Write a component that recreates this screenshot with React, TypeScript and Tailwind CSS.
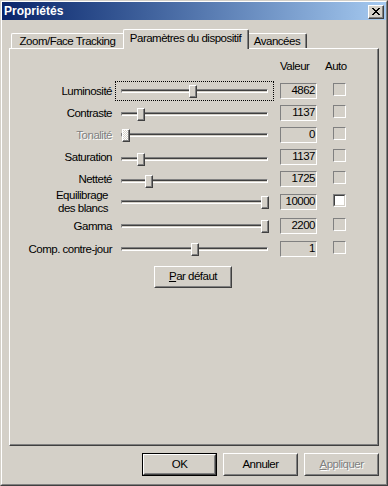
import React from "react";

type Row = {
  label: string[];
  value: string;
  pos: number;
  h: string;
  focus?: boolean;
  disabled?: boolean;
  enabledBox?: boolean;
  sOff?: string;
  lpr?: string;
};

const rows: Row[] = [
  { label: ["Luminosité"], value: "4862", pos: 74, h: "h-[22px]", focus: true },
  { label: ["Contraste"], value: "1137", pos: 22, h: "h-[22px]", sOff: "mt-[2px]" },
  { label: ["Tonalité"], value: "0", pos: 7, h: "h-[22px]", disabled: true },
  { label: ["Saturation"], value: "1137", pos: 22, h: "h-[22px]", sOff: "mt-[3px]" },
  { label: ["Netteté"], value: "1725", pos: 30, h: "h-[22px]", sOff: "mt-[3px]" },
  { label: ["Equilibrage", "des blancs"], value: "10000", pos: 146, h: "h-[24px]", enabledBox: true, lpr: "pr-[4px]" },
  { label: ["Gamma"], value: "2200", pos: 146, h: "h-[24px]" },
  { label: ["Comp. contre-jour"], value: "1", pos: 76, h: "h-[22px]" },
];

function Btn({
  children,
  w,
  h,
  isDefault,
}: {
  children: React.ReactNode;
  w: string;
  h: string;
  isDefault?: boolean;
}) {
  const inner = (
    <div className="w-full h-full border border-t-white border-l-white border-r-[#404040] border-b-[#404040]">
      <div className="w-full h-full border border-t-[#d4d0c8] border-l-[#d4d0c8] border-r-[#808080] border-b-[#808080] flex items-center justify-center">
        {children}
      </div>
    </div>
  );
  return (
    <div className={`${w} ${h} ${isDefault ? "border border-black" : ""}`}>{inner}</div>
  );
}

function CloseGlyph() {
  const px: [number, number, number][] = [
    [0, 0, 2], [6, 0, 2],
    [1, 1, 2], [5, 1, 2],
    [2, 2, 4],
    [3, 3, 2],
    [2, 4, 4],
    [1, 5, 2], [5, 5, 2],
    [0, 6, 2], [6, 6, 2],
  ];
  return (
    <svg width="8" height="7" viewBox="0 0 8 7" shapeRendering="crispEdges">
      {px.map(([x, y, w], i) => (
        <rect key={i} x={x} y={y} width={w} height={1} fill="#000" />
      ))}
    </svg>
  );
}

function Slider({ pos, focus, disabled, sOff }: { pos: number; focus?: boolean; disabled?: boolean; sOff?: string }) {
  return (
    <div className={`relative w-[159px] h-[20px] ml-[3px] shrink-0 ${sOff ?? ""}`}>
      {focus && <div className="absolute inset-0 border border-dotted border-black" />}
      <div className="absolute left-[6px] top-[8px] w-[147px] h-[4px] border border-t-[#808080] border-l-[#808080] border-r-white border-b-white">
        <div className="h-[1px] bg-[#404040]" />
      </div>
      <div
        className="absolute top-[4px] w-[8px] h-[13px] border border-t-white border-l-white border-r-[#404040] border-b-[#404040] bg-[#d4d0c8]"
        style={{ left: pos }}
      >
        <div
          className={`w-full h-full border-r border-b border-r-[#808080] border-b-[#808080] ${
            disabled ? "bg-[image:repeating-conic-gradient(#ffffff_0_25%,#d4d0c8_0_50%)] bg-[length:2px_2px]" : ""
          }`}
        />
      </div>
    </div>
  );
}

function Checkbox({ enabled }: { enabled?: boolean }) {
  return (
    <div className="ml-[16px] mb-[3px] w-[13px] h-[13px] shrink-0 border border-t-[#808080] border-l-[#808080] border-r-white border-b-white">
      {enabled && (
        <div className="w-full h-full bg-white border border-t-[#404040] border-l-[#404040] border-r-[#d4d0c8] border-b-[#d4d0c8]" />
      )}
    </div>
  );
}

export default function App() {
  return (
    <div className="w-[388px] h-[486px] bg-[#d4d0c8] font-['Liberation_Sans',Arial,sans-serif] text-[11.5px] tracking-[-0.5px] text-black border border-t-[#d4d0c8] border-l-[#d4d0c8] border-r-[#404040] border-b-[#404040]">
      <div className="w-full h-full border border-t-white border-l-white border-r-[#808080] border-b-[#808080] flex flex-col">
        {/* Title bar */}
        <div className="h-[18px] shrink-0 bg-linear-to-r from-[#0a246a] to-[#a6caf0] flex items-center justify-between pl-[2px] pr-[2px]">
          <span className="text-white font-bold text-[12px] tracking-normal leading-none">Propriétés</span>
          <div className="mt-[1px] w-[16px] h-[14px] border border-t-white border-l-white border-r-[#404040] border-b-[#404040] bg-[#d4d0c8]">
            <div className="w-full h-full border-r border-b border-r-[#808080] border-b-[#808080] flex items-center justify-center pl-[1px]">
              <CloseGlyph />
            </div>
          </div>
        </div>

        {/* Tabs */}
        <div className="flex items-end h-[28px] shrink-0 pl-[9px]">
          <div className="w-[112px] h-[15px] border-t border-l border-t-white border-l-white rounded-tl-[2px] flex items-center justify-center pt-[2px]">
            Zoom/Face Tracking
          </div>
          <div className="relative z-10 w-[126px] h-[20px] -mb-[1px] bg-[#d4d0c8] border-t border-l border-r border-t-white border-l-white border-r-[#404040] rounded-t-[2px]">
            <div className="w-full h-full border-r border-r-[#808080] flex items-center justify-center pb-[2px]">
              Paramètres du dispositif
            </div>
          </div>
          <div className="w-[58px] h-[15px] border-t border-r border-t-white border-r-[#404040] rounded-tr-[2px]">
            <div className="w-full h-full border-r border-r-[#808080] flex items-center justify-center pt-[2px]">
              Avancées
            </div>
          </div>
        </div>

        {/* Panel */}
        <div className="mx-[7px] h-[398px] shrink-0 border border-t-white border-l-white border-r-[#404040] border-b-[#404040]">
          <div className="w-full h-full border-r border-b border-r-[#808080] border-b-[#808080] flex flex-col">
            <div className="flex h-[31px] items-center pt-[4px] shrink-0">
              <span className="ml-[270px] w-[45px]">Valeur</span>
              <span>Auto</span>
            </div>
            {rows.map((r) => (
              <div key={r.label[0]} className={`flex items-center shrink-0 ${r.h}`}>
                <div
                  className={`w-[102px] shrink-0 text-right leading-[13px] ${r.lpr ?? ""} ${
                    r.disabled ? "text-[#808080] [text-shadow:1px_1px_0_#ffffff]" : ""
                  }`}
                >
                  {r.label.map((l) => (
                    <div key={l}>{l}</div>
                  ))}
                </div>
                <Slider pos={r.pos} focus={r.focus} disabled={r.disabled} sOff={r.sOff} />
                <div className="ml-[6px] w-[37px] h-[16px] shrink-0 border border-t-[#808080] border-l-[#808080] border-r-white border-b-white flex items-center justify-end pr-[1px]">
                  {r.value}
                </div>
                <Checkbox enabled={r.enabledBox} />
              </div>
            ))}
            <div className="mt-[6px] ml-[144px]">
              <Btn w="w-[78px]" h="h-[22px]">
                <span>
                  <span className="underline">P</span>ar défaut
                </span>
              </Btn>
            </div>
          </div>
        </div>

        {/* Bottom buttons */}
        <div className="mt-[7px] flex justify-end gap-[6px] pr-[7px]">
          <Btn w="w-[75px]" h="h-[23px]" isDefault>
            OK
          </Btn>
          <Btn w="w-[75px]" h="h-[23px]">
            Annuler
          </Btn>
          <Btn w="w-[75px]" h="h-[23px]">
            <span className="text-[#808080] [text-shadow:1px_1px_0_#ffffff]">
              <span className="underline">A</span>ppliquer
            </span>
          </Btn>
        </div>
      </div>
    </div>
  );
}
